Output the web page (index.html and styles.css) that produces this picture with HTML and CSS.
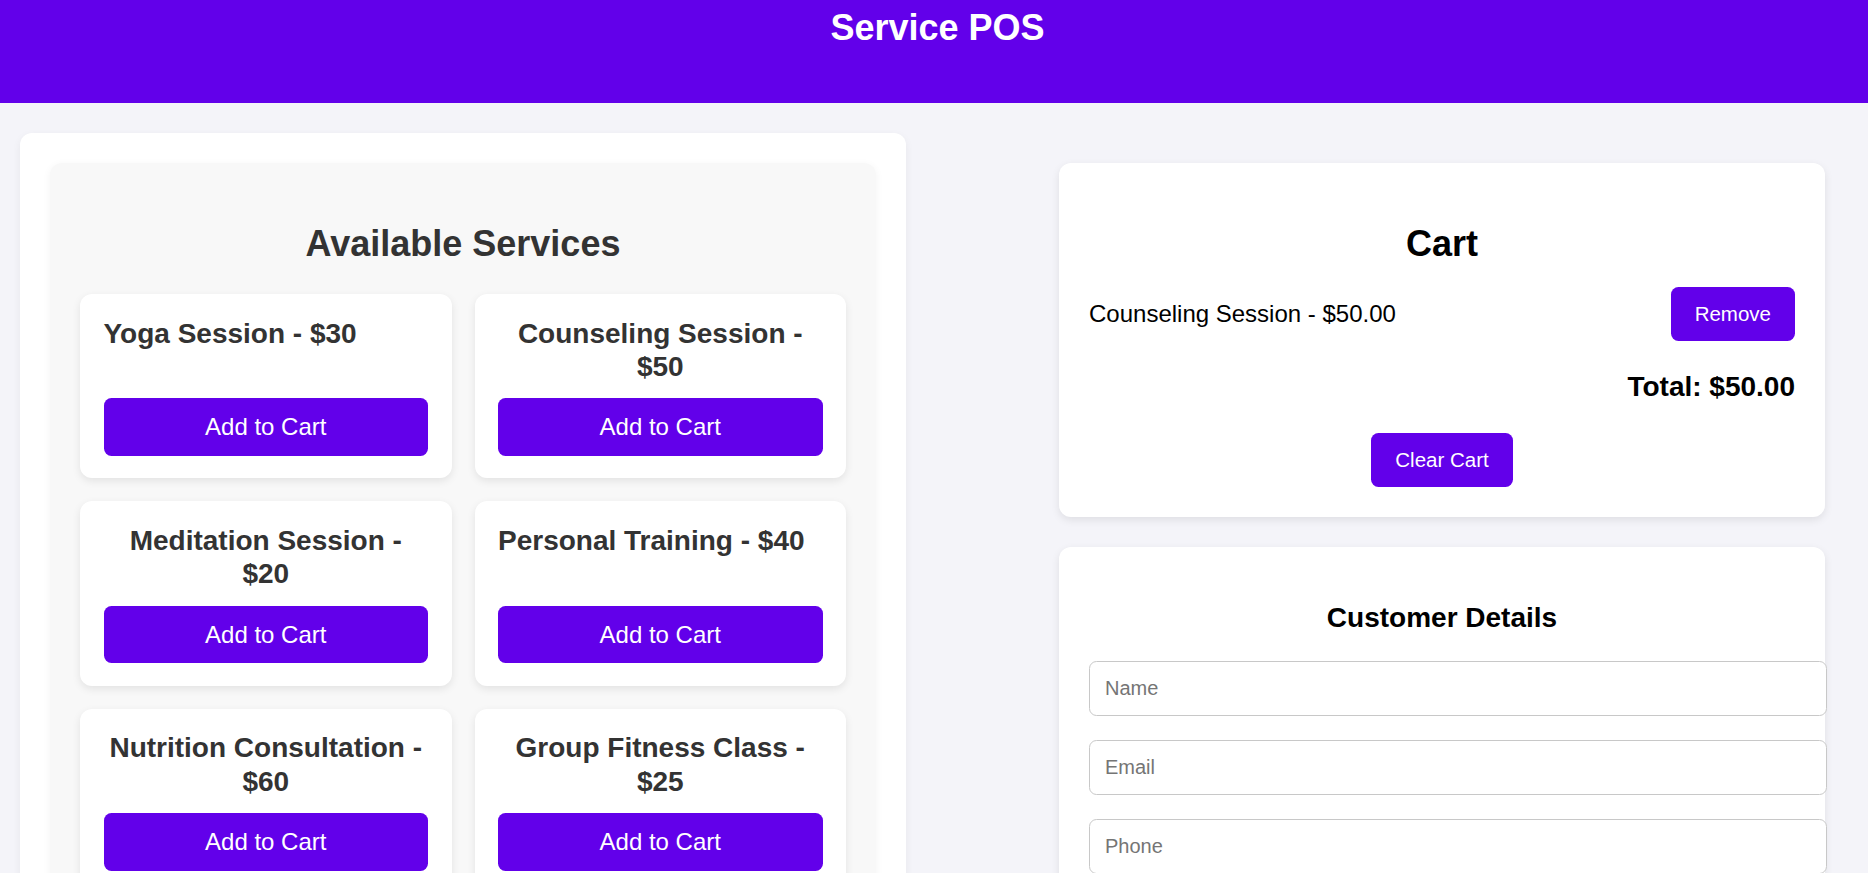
FILE: index.html
```html
<!DOCTYPE html>
<html lang="en">
<head>
<meta charset="utf-8">
<title>Service POS</title>
<link rel="stylesheet" href="styles.css">
</head>
<body>
<header class="topbar">
  <h1 class="title">Service POS</h1>
</header>
<main class="layout">
  <section class="panel">
    <div class="services">
      <h2 class="section-title">Available Services</h2>
      <div class="service-grid">
        <div class="service-card">
          <h3 class="service-name">Yoga Session - $30</h3>
          <button class="btn btn-add">Add to Cart</button>
        </div>
        <div class="service-card">
          <h3 class="service-name">Counseling Session - $50</h3>
          <button class="btn btn-add">Add to Cart</button>
        </div>
        <div class="service-card">
          <h3 class="service-name">Meditation Session - $20</h3>
          <button class="btn btn-add">Add to Cart</button>
        </div>
        <div class="service-card">
          <h3 class="service-name">Personal Training - $40</h3>
          <button class="btn btn-add">Add to Cart</button>
        </div>
        <div class="service-card">
          <h3 class="service-name">Nutrition Consultation - $60</h3>
          <button class="btn btn-add">Add to Cart</button>
        </div>
        <div class="service-card">
          <h3 class="service-name">Group Fitness Class - $25</h3>
          <button class="btn btn-add">Add to Cart</button>
        </div>
      </div>
    </div>
  </section>
  <aside class="sidebar">
    <div class="card cart">
      <h2 class="cart-title">Cart</h2>
      <div class="cart-row">
        <span class="cart-item">Counseling Session - $50.00</span>
        <button class="btn btn-small">Remove</button>
      </div>
      <div class="total">Total: $50.00</div>
      <div class="cart-actions">
        <button class="btn btn-small">Clear Cart</button>
      </div>
    </div>
    <div class="card customer">
      <h3 class="customer-title">Customer Details</h3>
      <input class="field" type="text" placeholder="Name">
      <input class="field" type="email" placeholder="Email">
      <input class="field" type="tel" placeholder="Phone">
    </div>
  </aside>
</main>
</body>
</html>
```
FILE: styles.css
```css
body {
  margin: 0;
  background: #f4f4f9;
  font-family: "Liberation Sans", Arial, sans-serif;
  font-size: 24px;
  color: #000;
}

.topbar {
  background: #6200ea;
  color: #fff;
  height: 103px;
  box-sizing: border-box;
  padding: 7px 0 0 7px;
  text-align: center;
}

.title {
  margin: 0;
  font-size: 36px;
  font-weight: bold;
  line-height: 41px;
}

.layout {
  display: flex;
  align-items: flex-start;
  padding: 30px 0 0 20px;
}

.panel {
  width: 886px;
  box-sizing: border-box;
  padding: 30px;
  background: #fff;
  border-radius: 12px;
  box-shadow: 0 3px 9px rgba(0, 0, 0, 0.06);
}

.services {
  background: #f8f8f8;
  border-radius: 12px;
  padding: 30px;
  box-shadow: 0 2px 8px rgba(0, 0, 0, 0.05);
}

.section-title {
  margin: 30px 0;
  font-size: 36px;
  line-height: 41px;
  text-align: center;
  color: #333;
}

.service-grid {
  display: grid;
  grid-template-columns: 1fr 1fr;
  gap: 23px;
}

.service-card {
  display: flex;
  flex-direction: column;
  background: #fff;
  border-radius: 12px;
  padding: 22.5px 23.5px;
  box-shadow: 0 3px 8px rgba(0, 0, 0, 0.09);
}

.service-name {
  align-self: flex-start;
  margin: 0 0 15px;
  font-size: 28px;
  line-height: 33.4px;
  text-align: center;
  color: #333;
}

.btn {
  background: #6200ea;
  color: #fff;
  border: none;
  border-radius: 7.5px;
  font-family: inherit;
  cursor: pointer;
}

.btn-add {
  margin-top: auto;
  padding: 15px;
  font-size: 24px;
  line-height: 27.6px;
}

.sidebar {
  margin-left: 153px;
  width: 766px;
  padding-top: 30px;
  display: flex;
  flex-direction: column;
  gap: 30px;
}

.card {
  background: #fff;
  border-radius: 12px;
  padding: 30px;
  box-shadow: 0 3px 9px rgba(0, 0, 0, 0.09);
}

.cart-title {
  margin: 30px 0 22.5px;
  font-size: 36px;
  line-height: 41px;
  text-align: center;
}

.cart-row {
  display: flex;
  justify-content: space-between;
  align-items: center;
}

.cart-item {
  font-size: 24px;
}

.btn-small {
  padding: 15.5px 24px;
  font-size: 20.5px;
  line-height: 23px;
}

.total {
  margin: 30px 0;
  font-size: 28px;
  font-weight: bold;
  line-height: 32.2px;
  text-align: right;
}

.cart-actions {
  text-align: center;
}

.customer-title {
  margin: 25px 0 27px;
  font-size: 28px;
  line-height: 32.2px;
  text-align: center;
}

.field {
  display: block;
  width: 100%;
  box-sizing: content-box;
  margin: 0 0 24px;
  padding: 15px;
  border: 1px solid #c8c8c8;
  border-radius: 7.5px;
  font-family: inherit;
  font-size: 20px;
  line-height: 23px;
  background: #fff;
}

.field::placeholder {
  color: #757575;
}
```
